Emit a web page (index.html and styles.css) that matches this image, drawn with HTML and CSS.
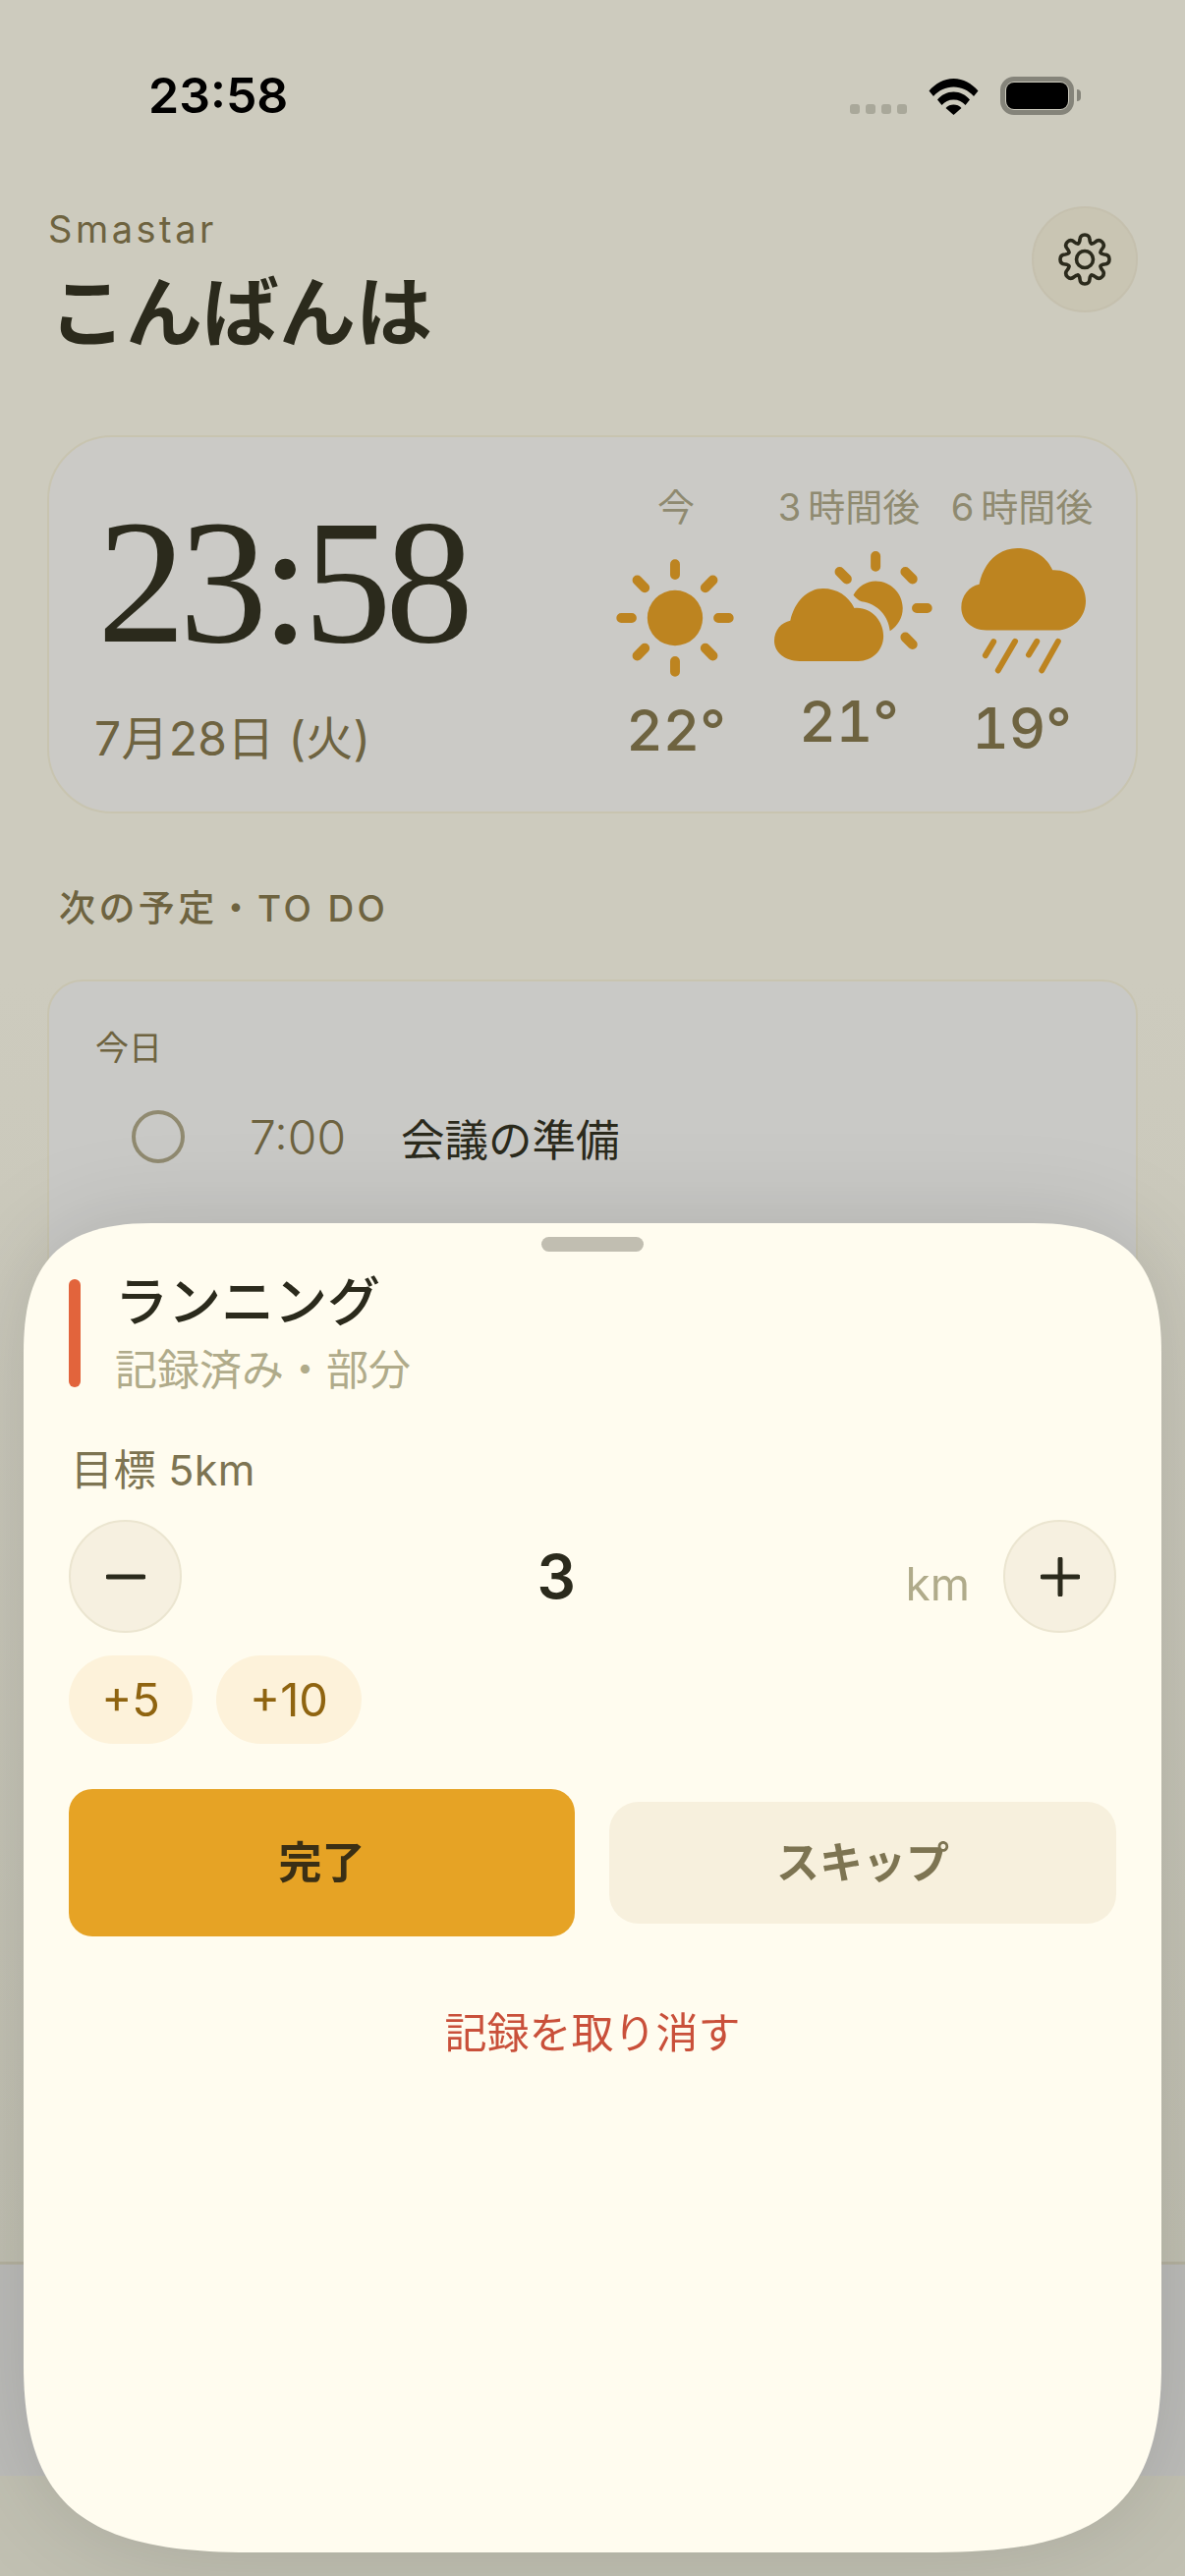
FILE: index.html
```html
<!DOCTYPE html>
<html lang="ja">
    <head>
        <title>Smastar</title>
        <link rel="stylesheet" href="styles.css">
    </head>
    <body>
        <div class="screen">
            <div class="status">
                <span class="status-time">23:58</span>
                <div class="status-icons">
                    <div class="signal"><i></i><i></i><i></i><i></i></div>
                    <svg class="wifi" viewBox="0 0 51 38">
                        <path d="M0.5 13.5C7 6 15.500 1 25.500 1S44 6 50.500 13.500L46 19C40.500 13 33.500 9.500 25.500 9.500S10.500 13 5 19Z"/>
                        <path d="M9 22.500C13 17.500 19 14.500 25.500 14.500S38 17.500 42 22.500L37.500 28C34.500 24.500 30.500 22.500 25.500 22.500S16.500 24.500 13.500 28Z"/>
                        <path d="M17.500 31C19.500 28.500 22.500 27.500 25.500 27.500S31.500 28.500 33.500 31L25.500 38Z"/>
                    </svg>
                    <div class="battery"><div class="battery-fill"></div></div>
                    <div class="battery-nub"></div>
                </div>
            </div>

            <div class="header">
                <div>
                    <div class="brand">Smastar</div>
                    <div class="greeting">こんばんは</div>
                </div>
                <div class="gear-btn">
                    <svg class="gear" viewBox="-29 -29 58 58">
                        <defs>
                            <path id="tooth" d="M-6.700 -16.200C-5.500 -16.800 -5.200 -18 -5 -20C-4.800 -24 -3 -25 0 -25C3 -25 4.800 -24 5 -20C5.200 -18 5.500 -16.800 6.700 -16.200"/>
                        </defs>
                        <use href="#tooth"/>
                        <use href="#tooth" transform="rotate(45)"/>
                        <use href="#tooth" transform="rotate(90)"/>
                        <use href="#tooth" transform="rotate(135)"/>
                        <use href="#tooth" transform="rotate(180)"/>
                        <use href="#tooth" transform="rotate(225)"/>
                        <use href="#tooth" transform="rotate(270)"/>
                        <use href="#tooth" transform="rotate(315)"/>
                        <circle r="8.500"/>
                    </svg>
                </div>
            </div>

            <div class="clock-card">
                <div class="clock-left">
                    <div class="clock">23:58</div>
                    <div class="date">7月28日 (火)</div>
                </div>
                <div class="forecast">
                    <div class="slot">
                        <div class="slot-label">今</div>
                        <svg class="icon icon-sun" viewBox="80 295 362 362">
                            <circle class="fill" cx="261" cy="476" r="85"/>
                            <path class="ray" d="M261 311V343M261 609V641M96 476H128M394 476H426M145 360L168 383M354 569L377 592M377 360L354 383M168 569L145 592"/>
                        </svg>
                        <div class="slot-temp">22°</div>
                    </div>
                    <div class="slot">
                        <div class="slot-label">3&#8201;時間後</div>
                        <svg class="icon icon-partly" viewBox="560 268 490 342">
                            <path class="fill" d="M805 405C820 378 845 362 873 362C920 362 956 400 956 445C956 475 940 500 917 515C912 470 880 432 830 425C820 422 812 412 805 405Z"/>
                            <path class="fill" d="M640 607C596 607 563 580 563 545C563 512 585 488 612 483C625 425 665 385 712 385C755 385 790 408 808 445C860 440 897 485 897 530C897 575 862 607 820 607Z"/>
                            <path class="ray" d="M873 286V318M999 445H1031M964 334L986 356M763 334L785 356M964 534L986 556"/>
                        </svg>
                        <div class="slot-temp">21°</div>
                    </div>
                    <div class="slot">
                        <div class="slot-label">6&#8201;時間後</div>
                        <svg class="icon icon-rain" viewBox="1130 260 390 392">
                            <path class="fill" d="M1210 515C1165 515 1133 485 1133 445C1133 408 1158 380 1188 374C1200 310 1245 263 1305 263C1360 263 1398 295 1413 330C1470 328 1515 370 1515 425C1515 475 1475 515 1425 515Z"/>
                            <path class="rain" d="M1232 550L1207 592M1298 549L1246 638M1365 549L1340 590M1430 549L1380 638"/>
                        </svg>
                        <div class="slot-temp">19°</div>
                    </div>
                </div>
            </div>

            <div class="section-title">次の予定・TO DO</div>

            <div class="todo-card">
                <div class="todo-day">今日</div>
                <div class="todo-row">
                    <div class="todo-check"></div>
                    <span class="todo-time">7:00</span>
                    <span class="todo-name">会議の準備</span>
                </div>
            </div>

            <div class="tabbar"></div>
        </div>

        <div class="sheet-shadow">
            <div class="sheet">
                <div class="handle"></div>
                <div class="task-head">
                    <div class="task-bar"></div>
                    <div>
                        <div class="task-title">ランニング</div>
                        <div class="task-sub">記録済み・部分</div>
                    </div>
                </div>
                <div class="goal">目標 5km</div>
                <div class="stepper">
                    <div class="step-btn"><svg viewBox="0 0 40 40"><path d="M2 20H38"/></svg></div>
                    <div class="step-value">3</div>
                    <div class="step-unit">km</div>
                    <div class="step-btn"><svg viewBox="0 0 40 40"><path d="M2 20H38M20 2V38"/></svg></div>
                </div>
                <div class="chips">
                    <div class="chip chip-5">+5</div>
                    <div class="chip chip-10">+10</div>
                </div>
                <div class="actions">
                    <div class="btn-done">完了</div>
                    <div class="btn-skip">スキップ</div>
                </div>
                <div class="undo">記録を取り消す</div>
            </div>
        </div>
    </body>
</html>
```

FILE: styles.css
```css
* {
    box-sizing: border-box;
}
body {
    margin: 0;
    width: 1206px;
    height: 2622px;
    position: relative;
    overflow: hidden;
    font-family: Inter, "Noto Sans CJK JP", sans-serif;
    color: #2b2a1c;
    background-color: #bdbcb3;
}
.screen {
    height: 2622px;
    display: flex;
    flex-direction: column;
    background: linear-gradient(#cdcbbe, #cdcbbe 1000px, #c1c0b2 2302px);
}

/* status bar */
.status {
    height: 210px;
    padding: 72px 0 0 151px;
    display: flex;
    justify-content: space-between;
}
.status-time {
    font-size: 50px;
    line-height: 50px;
    font-weight: 600;
    color: #000;
}
.status-icons {
    display: flex;
    align-items: flex-start;
    padding: 6px 106px 0 0;
}
.signal {
    display: flex;
    gap: 6px;
    margin: 28px 22px 0 0;
}
.signal i {
    width: 10px;
    height: 10px;
    border-radius: 3px;
    background-color: #a9a89a;
}
.wifi {
    width: 51px;
    height: 38px;
    margin: 1px 22px 0 0;
}
.battery {
    width: 75px;
    height: 39px;
    padding: 1px;
    border: 5px solid #85847a;
    border-radius: 14px;
}
.battery-fill {
    height: 100%;
    background-color: #000;
    border-radius: 8px;
}
.battery-nub {
    width: 4px;
    height: 12px;
    margin: 13px 0 0 3px;
    background-color: #85847a;
    border-radius: 0 4px 4px 0;
}

/* header */
.header {
    height: 153px;
    padding: 0 48px 0 49px;
    display: flex;
    justify-content: space-between;
}
.brand {
    margin-top: 3px;
    font-size: 38px;
    line-height: 40px;
    letter-spacing: 3.500px;
    color: #6e6340;
}
.greeting {
    margin-top: 21px;
    margin-left: 1px;
    font-size: 78px;
    line-height: 90px;
    font-weight: 700;
}
.gear-btn {
    width: 108px;
    height: 108px;
    border-radius: 50%;
    border: 2px solid #c5c0ae;
    background-color: #c9c5b3;
    display: flex;
    align-items: center;
    justify-content: center;
}
.gear {
    width: 58px;
    height: 58px;
    fill: none;
    stroke: #2b2a1c;
    stroke-width: 3.600;
    stroke-linecap: round;
}

/* clock card */
.clock-card {
    margin: 80px 48px 0 48px;
    height: 385px;
    padding-right: 28px;
    display: flex;
    justify-content: space-between;
    border: 2px solid #c8c4b0;
    border-radius: 66px;
    background-color: #cbcac6;
}
.clock-left {
    padding: 58px 0 0 49px;
}
.clock {
    font-family: "Liberation Serif", serif;
    font-size: 180px;
    line-height: 180px;
    letter-spacing: -6.750px;
}
.date {
    margin-top: 39px;
    margin-left: -3px;
    font-size: 48px;
    line-height: 60px;
    color: #6e6340;
    letter-spacing: 0.300px;
}
.forecast {
    display: flex;
    padding-top: 46px;
}
.slot {
    width: 176px;
    display: flex;
    flex-direction: column;
    align-items: center;
}
.slot-label {
    font-size: 38px;
    line-height: 50px;
    white-space: nowrap;
    color: #8f8a70;
}
.slot-temp {
    font-size: 58px;
    line-height: 60px;
    font-weight: 500;
    font-variant-numeric: tabular-nums;
    color: #6e6340;
}
.icon {
    display: block;
}
.icon .fill {
    fill: #bd8420;
}
.icon .ray {
    fill: none;
    stroke: #bd8420;
    stroke-width: 30;
    stroke-linecap: round;
}
.icon .rain {
    fill: none;
    stroke: #bd8420;
    stroke-width: 18;
    stroke-linecap: round;
}
.icon-sun {
    width: 120px;
    height: 120px;
    margin: 28px 2px 24px 0;
}
.icon-partly {
    width: 163px;
    height: 114px;
    margin: 19px 0 30px 8px;
}
.icon-rain {
    width: 130px;
    height: 130px;
    margin: 16px 0 24px 3px;
}

/* to do */
.section-title {
    margin: 77px 0 0 60px;
    font-size: 37px;
    line-height: 40px;
    font-weight: 500;
    letter-spacing: 3.400px;
    color: #6e6340;
}
.todo-card {
    margin: 52px 48px 0 48px;
    height: 700px;
    padding: 48px 0 0 47px;
    border: 2px solid #c8c4b0;
    border-radius: 36px;
    background-color: #c9c9c6;
}
.todo-day {
    font-size: 34px;
    line-height: 40px;
    color: #6e6340;
}
.todo-row {
    margin: 40px 0 0 37px;
    height: 60px;
    display: flex;
    align-items: center;
}
.todo-check {
    width: 54px;
    height: 54px;
    border: 4px solid #908a70;
    border-radius: 50%;
}
.todo-time {
    margin-left: 66px;
    font-size: 48px;
    color: #6e6340;
    font-weight: 300;
}
.todo-name {
    margin-left: 56px;
    font-size: 44.500px;
}
.tabbar {
    margin-top: auto;
    margin-bottom: 102px;
    height: 218px;
    border-top: 3px solid #b5b2a0;
    background-color: #bcbcb9;
}

/* sheet */
.sheet-shadow {
    position: absolute;
    left: 24px;
    top: 1245px;
    filter: drop-shadow(0 0 45px rgba(0, 0, 0, 0.13));
}
.sheet {
    width: 1158px;
    height: 1353px;
    padding: 14px 46px 0;
    background-color: #fffcef;
    clip-path: path("M130 0H1028C1132 0 1158 52 1158 132V1162C1158 1307 1093 1353 928 1353H230C65 1353 0 1307 0 1162V132C0 52 26 0 130 0Z");
}
.handle {
    width: 104px;
    height: 15px;
    margin: 0 auto;
    border-radius: 8px;
    background-color: #c1beb1;
}
.task-head {
    margin-top: 28px;
    height: 110px;
    display: flex;
    gap: 35px;
}
.task-bar {
    width: 12px;
    border-radius: 6px;
    background-color: #e2643c;
}
.task-title {
    font-size: 54px;
    line-height: 46px;
    margin-top: 1px;
    font-weight: 500;
}
.task-sub {
    margin-top: 26px;
    font-size: 43px;
    line-height: 38px;
    color: #b0ab8a;
}
.goal {
    margin: 59px 0 0 2px;
    font-size: 43px;
    line-height: 50px;
    letter-spacing: 0.400px;
    color: #7d7452;
}
.stepper {
    margin-top: 26px;
    display: flex;
    align-items: center;
}
.step-btn {
    width: 115px;
    height: 115px;
    border-radius: 50%;
    border: 2px solid #ebe5d0;
    background-color: #f6f0e0;
    display: flex;
    align-items: center;
    justify-content: center;
}
.step-btn svg {
    width: 40px;
    height: 40px;
    fill: none;
    stroke: #2b2a1c;
    stroke-width: 5;
    stroke-linecap: round;
}
.step-value {
    flex: 1;
    padding-left: 26px;
    text-align: center;
    font-size: 62px;
    font-weight: 600;
}
.step-unit {
    margin: 14px 34px 0 0;
    font-size: 46px;
    color: #b0ab8a;
}
.chips {
    margin-top: 23px;
    display: flex;
    gap: 24px;
}
.chip {
    height: 90px;
    border-radius: 45px;
    background-color: #fdf2da;
    color: #8f6410;
    font-size: 47px;
    line-height: 90px;
    text-align: center;
}
.chip-5 {
    width: 126px;
}
.chip-10 {
    width: 148px;
}
.actions {
    margin-top: 46px;
    display: flex;
    align-items: center;
    gap: 35px;
}
.btn-done {
    width: 515px;
    height: 150px;
    border-radius: 24px;
    background-color: #e6a325;
    color: #3a2f15;
    font-size: 44px;
    font-weight: 700;
    line-height: 150px;
    text-align: center;
}
.btn-skip {
    width: 516px;
    height: 124px;
    border-radius: 30px;
    background-color: #f7f0dd;
    color: #7d7452;
    font-size: 44px;
    font-weight: 700;
    line-height: 124px;
    text-align: center;
}
.undo {
    margin-top: 73px;
    font-size: 43px;
    line-height: 50px;
    text-align: center;
    color: #c9503a;
}
```
